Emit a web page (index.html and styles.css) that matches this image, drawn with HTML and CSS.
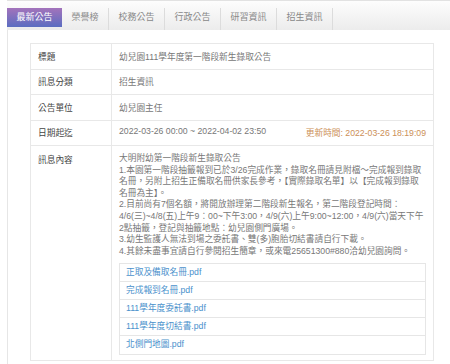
FILE: index.html
```html
<!DOCTYPE html>
<html lang="zh-Hant">
<head>
    <meta charset="UTF-8">
    <meta name="viewport" content="width=device-width, initial-scale=1.0">
    <title>最新公告</title>
    <link rel="stylesheet" href="styles.css">
</head>
<body>
    <div class="board">
        <ul class="tabs">
            <li class="tab active">最新公告</li>
            <li class="tab">榮譽榜</li>
            <li class="tab">校務公告</li>
            <li class="tab">行政公告</li>
            <li class="tab">研習資訊</li>
            <li class="tab">招生資訊</li>
        </ul>

        <div class="panel">
            <table class="news-table">
                <tr>
                    <th>標題</th>
                    <td>幼兒園111學年度第一階段新生錄取公告</td>
                </tr>
                <tr>
                    <th>訊息分類</th>
                    <td>招生資訊</td>
                </tr>
                <tr>
                    <th>公告單位</th>
                    <td>幼兒園主任</td>
                </tr>
                <tr>
                    <th>日期起迄</th>
                    <td>
                        <div class="date-row">
                            <span>2022-03-26 00:00 ~ 2022-04-02 23:50</span>
                            <span class="updated">更新時間: 2022-03-26 18:19:09</span>
                        </div>
                    </td>
                </tr>
                <tr>
                    <th class="top">訊息內容</th>
                    <td class="content">
                        <p>大明附幼第一階段新生錄取公告<br>
                        1.本園第一階段抽籤報到已於3/26完成作業，錄取名冊請見附檔～完成報到錄取名冊，另附上招生正備取名冊供家長參考，【實際錄取名單】以【完成報到錄取名冊為主】。<br>
                        2.目前尚有7個名額，將開放辦理第二階段新生報名，第二階段登記時間：4/6(三)~4/8(五)上午9：00~下午3:00，4/9(六)上午9:00~12:00，4/9(六)當天下午2點抽籤，登記與抽籤地點：幼兒園側門廣場。<br>
                        3.幼生監護人無法到場之委託書、雙(多)胞胎切結書請自行下載。<br>
                        4.其餘未盡事宜請自行參閱招生簡章，或來電25651300#880洽幼兒園詢問。</p>
                        <ul class="files">
                            <li><a href="#">正取及備取名冊.pdf</a></li>
                            <li><a href="#">完成報到名冊.pdf</a></li>
                            <li><a href="#">111學年度委託書.pdf</a></li>
                            <li><a href="#">111學年度切結書.pdf</a></li>
                            <li><a href="#">北側門地圖.pdf</a></li>
                        </ul>
                    </td>
                </tr>
            </table>
        </div>
    </div>
</body>
</html>
```

FILE: styles.css
```css
* {
    margin: 0;
    padding: 0;
    box-sizing: border-box;
}

body {
    background-color: #fff;
    color: #555;
    font-family: "Liberation Sans", "Noto Sans CJK TC", sans-serif;
    font-size: 8.7px;
    overflow: hidden;
}

.board {
    margin-left: 7px;
    width: 460px;
}

.tabs {
    list-style: none;
    display: flex;
    height: 30px;
    padding-top: 7px;
    border-top: 1px solid #e2e2e2;
    background: linear-gradient(#fdfdfd, #ececec);
}

.tab {
    height: 22px;
    line-height: 19px;
    padding: 0 9.5px;
    color: #888;
    font-size: 9px;
    border-right: 1px solid #dcdcdc;
}

.tab.active {
    height: 19px;
    color: #fff;
    border-right: none;
    background: linear-gradient(#a373bb, #5b6dc1);
}

.panel {
    border-left: 1px solid #e6e6e6;
    padding: 13px 0 0 22px;
    height: 340px;
}

.news-table {
    width: 404px;
    border-collapse: collapse;
    border: 1px solid #e8e8e8;
}

.news-table th,
.news-table td {
    border-bottom: 1px solid #e8e8e8;
    text-align: left;
    vertical-align: middle;
    padding: 0 7px;
    height: 25.5px;
    font-weight: normal;
}

.news-table th {
    width: 81px;
    color: #444;
    border-right: 1px solid #e8e8e8;
}

.news-table td {
    color: #777;
}

.news-table th.top {
    vertical-align: top;
    padding-top: 7px;
}

.date-row {
    display: flex;
    justify-content: space-between;
}

.updated {
    color: #cc8f57;
}

.content {
    padding: 7px 7px 5px 7px !important;
}

.content p {
    line-height: 11.6px;
    color: #777;
}

.files {
    list-style: none;
    margin-top: 6px;
    border: 1px solid #e6e6e6;
}

.files li {
    height: 18px;
    line-height: 17px;
    padding-left: 6px;
    border-bottom: 1px solid #e6e6e6;
}

.files li:last-child {
    border-bottom: none;
}

.files a {
    color: #4a91cc;
    text-decoration: none;
}
```
